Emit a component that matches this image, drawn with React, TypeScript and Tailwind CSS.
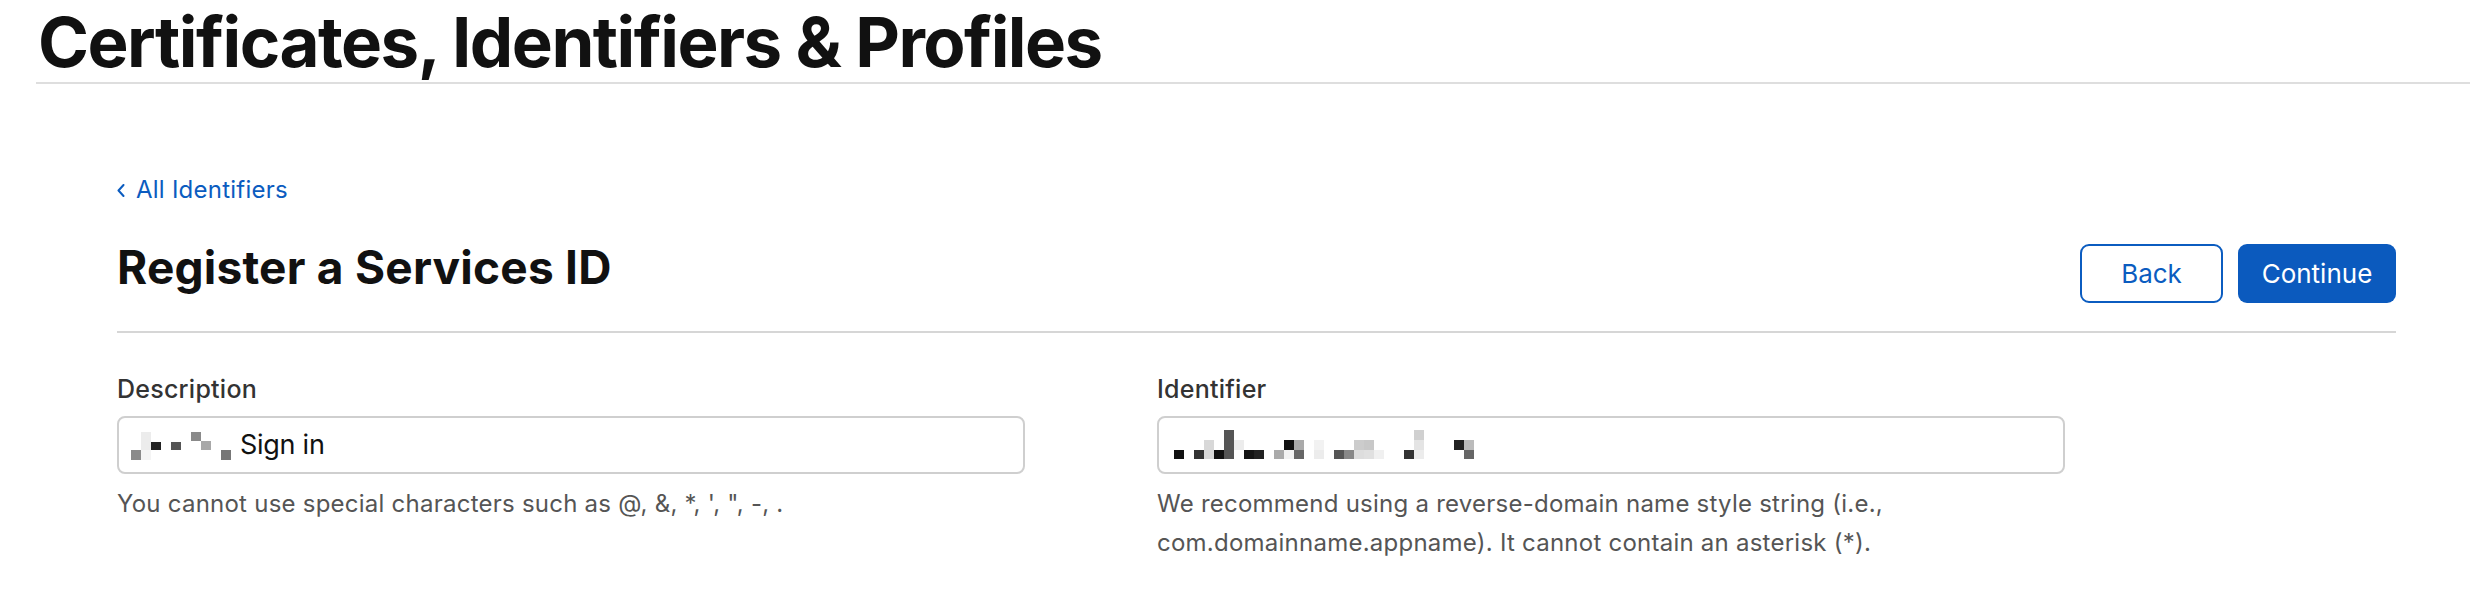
import React from "react";

const blue = "#0b5cc0";

type Cell = [number, number, number, number, string];

const descCells: Cell[] = [
  [0, 20, 10, 10, "#8a8a8a"],
  [10, 2, 10, 18, "#ececec"],
  [10, 20, 10, 10, "#f4f4f4"],
  [20, 12, 10, 8, "#222"],
  [40, 12, 10, 8, "#555"],
  [60, 2, 10, 9, "#8a8a8a"],
  [70, 11, 10, 9, "#a8a8a8"],
  [90, 20, 10, 10, "#777"],
];

// mosaic over the identifier value, 10px cells, 3 rows
const idCells: Cell[] = [
  [3, 20, 10, 9, "#111"],
  [23, 20, 10, 9, "#333"],
  [33, 10, 10, 19, "#d8d8d8"],
  [43, 20, 10, 9, "#111"],
  [53, 0, 10, 29, "#555"],
  [63, 10, 10, 10, "#ececec"],
  [73, 20, 10, 9, "#151515"],
  [83, 20, 10, 9, "#222"],
  [103, 20, 10, 9, "#aaa"],
  [113, 10, 10, 10, "#111"],
  [113, 20, 10, 9, "#f2f2f2"],
  [123, 10, 10, 10, "#aaa"],
  [123, 20, 10, 9, "#666"],
  [143, 10, 10, 10, "#f2f2f2"],
  [143, 20, 10, 9, "#ececec"],
  [163, 20, 10, 9, "#555"],
  [173, 20, 10, 9, "#888"],
  [183, 10, 10, 10, "#ccc"],
  [183, 20, 10, 9, "#ddd"],
  [193, 10, 10, 10, "#c8c8c8"],
  [193, 20, 10, 9, "#e0e0e0"],
  [203, 20, 10, 9, "#f0f0f0"],
  [233, 20, 10, 9, "#333"],
  [243, 0, 10, 10, "#d0d0d0"],
  [243, 10, 10, 10, "#e4e4e4"],
  [243, 20, 10, 9, "#ececec"],
  [283, 10, 10, 10, "#222"],
  [293, 10, 10, 10, "#bbb"],
  [293, 20, 10, 9, "#666"],
];

function Mosaic({ cells, width }: { cells: Cell[]; width: number }) {
  return (
    <svg width={width} height={30} className="shrink-0">
      {cells.map(([x, y, w, h, c], i) => (
        <rect key={i} x={x} y={y} width={w} height={h} fill={c} />
      ))}
    </svg>
  );
}

function Field({
  label,
  children,
  help,
  helpClass,
}: {
  label: string;
  children: React.ReactNode;
  help: string;
  helpClass: string;
}) {
  return (
    <div>
      <div className="text-[25px] leading-none font-medium text-[#333] tracking-[0.01em]">{label}</div>
      <div className="mt-[14px] h-[58px] border-2 border-[#cfcfcf] rounded-[8px] flex items-center pl-[12px]">
        {children}
      </div>
      <p className={`mt-[10px] text-[24px] leading-[39px] text-[#555] ${helpClass}`}>{help}</p>
    </div>
  );
}

export default function App() {
  return (
    <div className="bg-white h-[614px] overflow-hidden text-[#111]" style={{ fontFamily: "Inter, 'Noto Sans', sans-serif" }}>
      <header className="ml-[36px] border-b-2 border-[#dedede] pt-[8px] pb-[5px]">
        <h1 className="pl-[2px] text-[69px] leading-none font-bold tracking-[-0.022em]">
          Certificates, Identifiers &amp; Profiles
        </h1>
      </header>

      <main className="ml-[117px] w-[2279px]">
        <a href="#" className="mt-[94px] flex items-center gap-[11px] text-[24px] leading-none tracking-[0.01em]" style={{ color: blue }}>
          <svg width="8" height="13" viewBox="0 0 8 13" fill="none">
            <path d="M6.5 1 1.5 6.5l5 5.5" stroke={blue} strokeWidth="2" strokeLinecap="round" strokeLinejoin="round" />
          </svg>
          <span>All Identifiers</span>
        </a>

        <div className="mt-[42px] flex items-start justify-between">
          <h2 className="text-[46px] leading-none font-bold tracking-[0.005em]">Register a Services ID</h2>
          <div className="flex gap-[15px]">
            <button className="w-[143px] h-[59px] rounded-[9px] border-2 border-[#0b5cc0] text-[26px] text-[#0b5cc0]">
              Back
            </button>
            <button className="w-[158px] h-[59px] rounded-[9px] bg-[#0b5abe] text-[26px] text-white">
              Continue
            </button>
          </div>
        </div>

        <div className="mt-[28px] border-t-2 border-[#d6d6d6]" />

        <div className="mt-[44px] grid grid-cols-[908px_908px] gap-x-[132px]">
          <Field
            label="Description"
            helpClass="tracking-[0.01em]"
            help={"You cannot use special characters such as @, &, *, ', \", -, ."}
          >
            <Mosaic cells={descCells} width={100} />
            <span className="ml-[9px] text-[27px] text-[#111] tracking-[-0.01em]">Sign in</span>
          </Field>
          <Field
            label="Identifier"
            helpClass="tracking-[0.01em]"
            help="We recommend using a reverse-domain name style string (i.e., com.domainname.appname). It cannot contain an asterisk (*)."
          >
            <Mosaic cells={idCells} width={303} />
          </Field>
        </div>
      </main>
    </div>
  );
}
